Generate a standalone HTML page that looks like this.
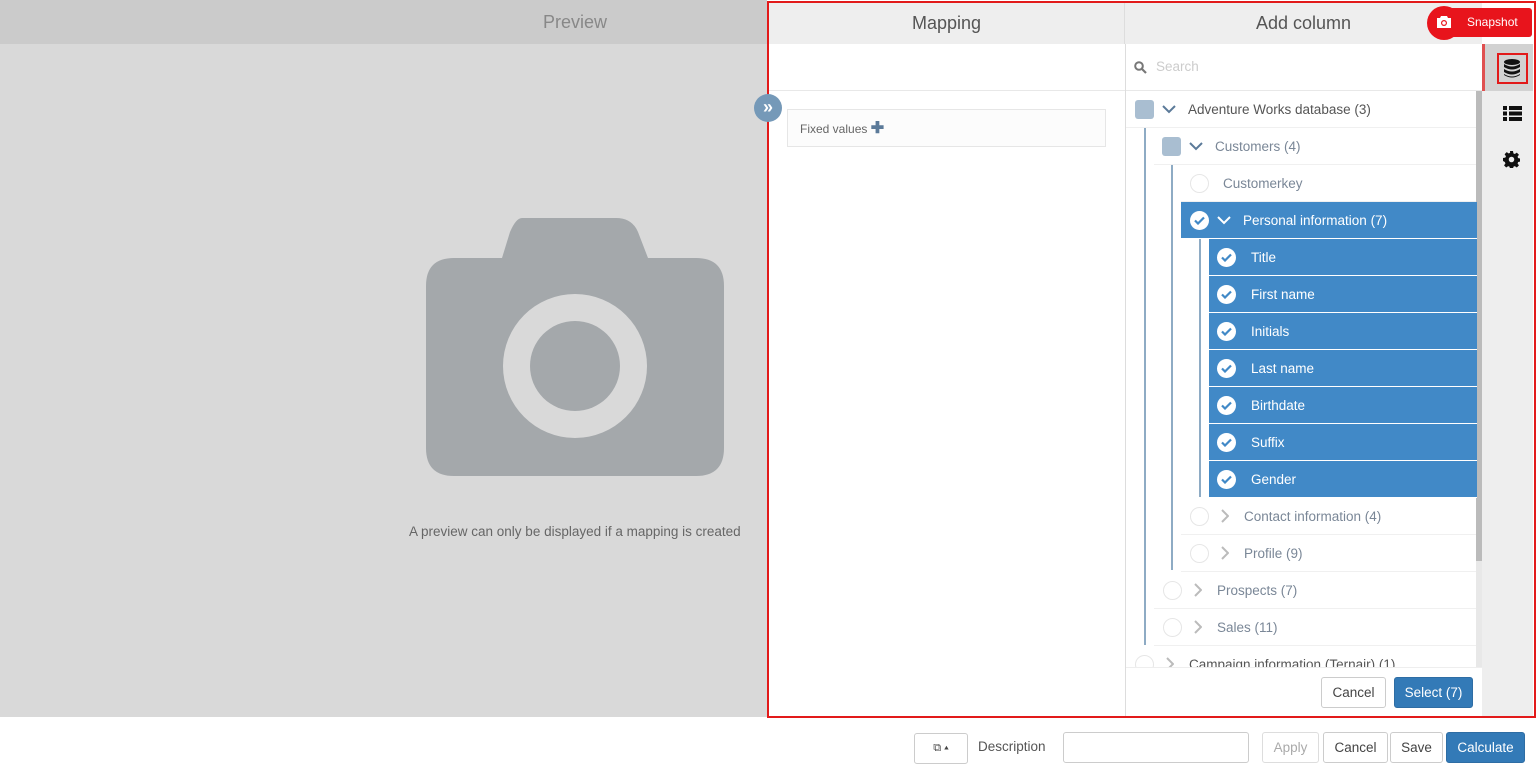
<!DOCTYPE html>
<html><head><style>
*{box-sizing:border-box;margin:0;padding:0}
body{width:1536px;height:772px;overflow:hidden;font-family:"Liberation Sans",sans-serif;background:#fff;position:relative;color:#555}
.a{position:absolute}
.row{position:absolute;height:37px;display:flex;align-items:center;font-size:13.5px;color:#7a8797;border-bottom:1px solid #f0f0f0}
.sel{background:#4189c7;color:#fff;border-bottom:1px solid #fff}
.circ{width:19px;height:19px;border-radius:50%;border:1px solid #e6e6e6;background:#fff;flex:none}
.chk{width:19px;height:19px;border-radius:50%;background:#fff;flex:none;display:flex;align-items:center;justify-content:center}
.sq{width:19px;height:19px;border-radius:3px;background:#a9bed1;flex:none}
.cv{flex:none;margin:0 12px 0 8px}
.btn{position:absolute;border:1px solid #ccc;border-radius:3px;background:#fff;font-size:13.5px;display:flex;align-items:center;justify-content:center;color:#444}
</style></head><body>
<div class="a" style="left:0;top:0;width:767px;height:717px;background:#d9d9d9"></div>
<div class="a" style="left:0;top:0;width:767px;height:44px;background:#cbcbcb"></div>
<div class="a" style="left:0;top:0;width:1150px;height:44px;text-align:center;line-height:44px;font-size:18px;color:#888">Preview</div>
<svg class="a" style="left:426px;top:218px" width="298" height="258" viewBox="0 0 298 258"><path d="M96 0H190Q206 0 212 14L222 40H270Q298 40 298 68V230Q298 258 270 258H28Q0 258 0 230V68Q0 40 28 40H76L84 14Q90 0 96 0Z" fill="#a4a8ab"/><circle cx="149" cy="148" r="72" fill="#d9d9d9"/><circle cx="149" cy="148" r="45" fill="#a4a8ab"/></svg>
<div class="a" style="top:524px;font-size:13.5px;color:#666;left:409px">A preview can only be displayed if a mapping is created</div>

<div class="a" style="left:767px;top:1px;width:769px;height:717px;border:2px solid #e21a1a;background:#fff"></div>
<div class="a" style="left:769px;top:3px;width:356px;height:41px;background:#eee;text-align:center;line-height:41px;font-size:18px;color:#555;border-right:1px solid #ddd">Mapping</div>
<div class="a" style="left:1125px;top:3px;width:357px;height:41px;background:#eee;text-align:center;line-height:41px;font-size:18px;color:#555">Add column</div>
<div class="a" style="left:1125px;top:44px;width:1px;height:672px;background:#ddd"></div>
<div class="a" style="left:769px;top:90px;width:356px;height:1px;background:#e8e8e8"></div>
<div class="a" style="left:787px;top:109px;width:319px;height:38px;border:1px solid #e6e6e6;background:#fcfcfc;font-size:12px;color:#666;padding-left:12px;line-height:37px">Fixed values <span style="color:#5b7a99;font-weight:bold;font-size:16px">✚</span></div>
<div class="a" style="left:754px;top:94px;width:28px;height:28px;border-radius:50%;background:#7599b8;color:#fff;text-align:center;line-height:26px;font-size:18px;font-weight:bold">»</div>

<div class="a" style="left:1429px;top:8px;width:103px;height:29px;background:#e8141c;border-radius:15px 3px 3px 15px"></div>
<div class="a" style="left:1427px;top:6px;width:34px;height:34px;border-radius:50%;background:#e8141c"></div>
<svg class="a" style="left:1436px;top:15px" width="16" height="14" viewBox="0 0 16 14"><path d="M5 1h6l1 2h3v10H1V3h3z" fill="#fff"/><circle cx="8" cy="8" r="3" fill="#e8141c"/><circle cx="8" cy="8" r="1.8" fill="#fff"/></svg>
<div class="a" style="left:1467px;top:15px;color:#fff;font-size:12px">Snapshot</div>

<div class="a" style="left:1482px;top:44px;width:51px;height:672px;background:#eee"></div>
<div class="a" style="left:1482px;top:44px;width:51px;height:47px;background:#d2d2d2;border-left:3px solid #e05050"></div>
<div class="a" style="left:1497px;top:53px;width:31px;height:31px;border:2px solid #e21a1a"></div>
<svg class="a" style="left:1503px;top:58px" width="18" height="20" viewBox="0 0 18 20"><ellipse cx="9" cy="4" rx="8" ry="3" fill="#111"/><path d="M1 6q8 5 16 0v3q-8 5-16 0zM1 11q8 5 16 0v3q-8 5-16 0zM1 16q8 5 16 0v1q-8 5-16 0z" fill="#111"/></svg>
<svg class="a" style="left:1503px;top:106px" width="19" height="15" viewBox="0 0 19 15"><rect x="0" y="0" width="4" height="4" fill="#111"/><rect x="6" y="0" width="13" height="4" fill="#111"/><rect x="0" y="5.5" width="4" height="4" fill="#111"/><rect x="6" y="5.5" width="13" height="4" fill="#111"/><rect x="0" y="11" width="4" height="4" fill="#111"/><rect x="6" y="11" width="13" height="4" fill="#111"/></svg>
<svg class="a" style="left:1503px;top:151px" width="17" height="17" viewBox="0 0 16 16"><path d="M6.6 0h2.8l.4 2.2 1.3.6 1.9-1.3 2 2-1.3 1.9.6 1.3 2.2.4v2.8l-2.2.4-.6 1.3 1.3 1.9-2 2-1.9-1.3-1.3.6-.4 2.2H6.6l-.4-2.2-1.3-.6-1.9 1.3-2-2 1.3-1.9-.6-1.3L0 9.4V6.6l2.2-.4.6-1.3-1.3-1.9 2-2 1.9 1.3 1.3-.6z" fill="#111"/><circle cx="8" cy="8" r="2.6" fill="#eee"/></svg>

<svg class="a" style="left:1134px;top:61px" width="13" height="13" viewBox="0 0 13 13"><circle cx="5" cy="5" r="3.8" stroke="#777" stroke-width="2" fill="none"/><path d="M8 8l4 4" stroke="#777" stroke-width="2.2"/></svg>
<div class="a" style="left:1156px;top:59px;font-size:13.5px;color:#ccc">Search</div>
<div class="a" style="left:1126px;top:90px;width:356px;height:1px;background:#e8e8e8"></div>

<div class="a" style="left:1476px;top:91px;width:6px;height:576px;background:#e8e8e8"></div>
<div class="a" style="left:1476px;top:91px;width:6px;height:470px;background:#bbb"></div>
<div class="a" style="left:1144px;top:128px;width:2px;height:517px;background:#8eabc4"></div>
<div class="a" style="left:1171px;top:165px;width:2px;height:405px;background:#8eabc4"></div>
<div class="a" style="left:1199px;top:239px;width:2px;height:258px;background:#8eabc4"></div>

<div class="row" style="left:1126px;top:91px;width:350px;padding-left:9px;color:#555"><div class="sq"></div><svg class="cv" width="14" height="9" viewBox="0 0 14 9"><path d="M1 1l6 6 6-6" stroke="#5b7a99" stroke-width="2" fill="none"/></svg>Adventure Works database (3)</div>
<div class="row" style="left:1154px;top:128px;width:322px;padding-left:8px"><div class="sq"></div><svg class="cv" width="14" height="9" viewBox="0 0 14 9"><path d="M1 1l6 6 6-6" stroke="#5b7a99" stroke-width="2" fill="none"/></svg>Customers (4)</div>
<div class="row" style="left:1181px;top:165px;width:295px;padding-left:9px"><div class="circ"></div><span style="margin-left:14px">Customerkey</span></div>
<div class="row sel" style="left:1181px;top:202px;width:296px;padding-left:9px"><div class="chk"><svg width="11" height="9" viewBox="0 0 11 9"><path d="M1 4.5l3 3 6-6" stroke="#4189c7" stroke-width="2.2" fill="none"/></svg></div><svg class="cv" width="14" height="9" viewBox="0 0 14 9"><path d="M1 1l6 6 6-6" stroke="#fff" stroke-width="2" fill="none"/></svg>Personal information (7)</div>
<div id="kids"></div>
<script>
var n=["Title","First name","Initials","Last name","Birthdate","Suffix","Gender"],h="";
n.forEach(function(t,i){h+='<div class="row sel" style="left:1209px;top:'+(239+i*37)+'px;width:268px;padding-left:8px"><div class="chk"><svg width="11" height="9" viewBox="0 0 11 9"><path d="M1 4.5l3 3 6-6" stroke="#4189c7" stroke-width="2.2" fill="none"/></svg></div><span style="margin-left:15px">'+t+'</span></div>';});
var c=[[1181,498,"Contact information (4)"],[1181,535,"Profile (9)"],[1154,572,"Prospects (7)"],[1154,609,"Sales (11)"],[1126,646,"Campaign information (Ternair) (1)"]];
c.forEach(function(r){h+='<div class="row" style="left:'+r[0]+'px;top:'+r[1]+'px;width:'+(1476-r[0])+'px;padding-left:9px'+(r[0]==1126?';color:#555':'')+'"><div class="circ"></div><svg style="flex:none;margin:0 15px 0 12px" width="8" height="14" viewBox="0 0 8 14"><path d="M1 1l6 6-6 6" stroke="#bbb" stroke-width="2" fill="none"/></svg>'+r[2]+'</div>';});
document.getElementById('kids').innerHTML=h;
</script>
<div class="a" style="left:1126px;top:667px;width:356px;height:49px;background:#fff;border-top:1px solid #eee"></div>
<div class="btn" style="left:1321px;top:677px;width:65px;height:31px">Cancel</div>
<div class="btn" style="left:1394px;top:677px;width:79px;height:31px;background:#337ab7;border-color:#2e6da4;color:#fff">Select (7)</div>

<div class="btn" style="left:914px;top:733px;width:54px;height:31px;font-size:11px">⧉ ▴</div>
<div class="a" style="left:978px;top:739px;font-size:13.5px;color:#555">Description</div>
<div class="a" style="left:1063px;top:732px;width:186px;height:31px;border:1px solid #ccc;border-radius:3px"></div>
<div class="btn" style="left:1262px;top:732px;width:57px;height:31px;color:#aaa;border-color:#ddd">Apply</div>
<div class="btn" style="left:1323px;top:732px;width:65px;height:31px">Cancel</div>
<div class="btn" style="left:1390px;top:732px;width:53px;height:31px">Save</div>
<div class="btn" style="left:1446px;top:732px;width:79px;height:31px;background:#337ab7;border-color:#2e6da4;color:#fff">Calculate</div>
</body></html>
